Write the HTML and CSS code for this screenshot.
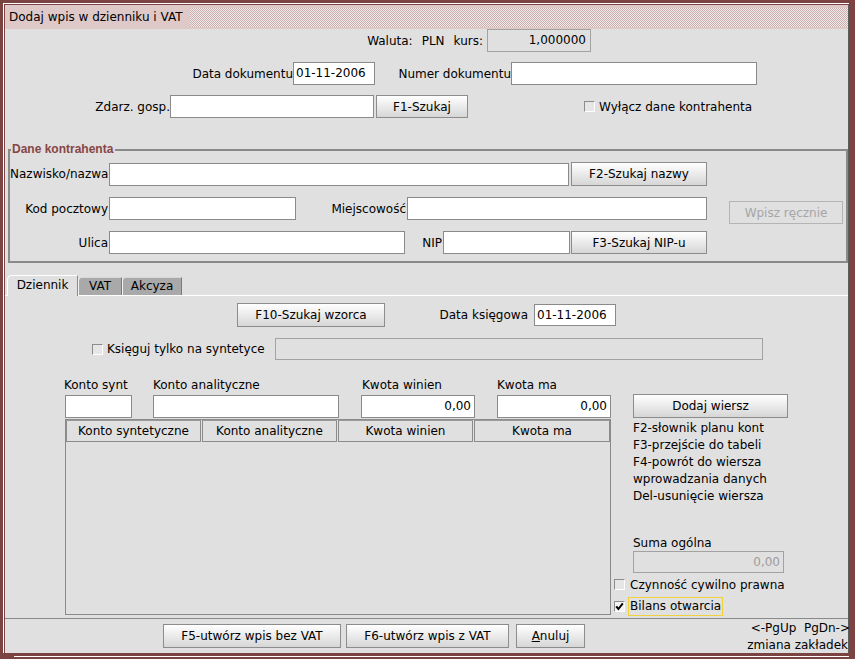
FILE: index.html
```html
<!DOCTYPE html>
<html lang="pl">
<head>
<meta charset="utf-8">
<title>Dodaj wpis w dzienniku i VAT</title>
<link rel="stylesheet" href="styles.css">
</head>
<body>
<div class="window">
  <div class="bevel">
    <div class="inner">
      <div class="titlebar">
        <span class="title">Dodaj wpis w dzienniku i VAT</span>
        <span class="grip"></span>
      </div>

      <div class="row row-a">
        <div class="currency"><span>Waluta:</span><span class="cur-pln">PLN</span><span class="cur-kurs">kurs:</span></div>
        <div class="field ro kurs">1,000000</div>
      </div>

      <div class="row row-b">
        <div class="lbl lbl-datadok">Data dokumentu</div>
        <div class="field w-datadok">01-11-2006</div>
        <div class="lbl lbl-numer">Numer dokumentu</div>
        <div class="field w-numer"></div>
      </div>

      <div class="row row-c">
        <div class="lbl lbl-zdarz">Zdarz. gosp.</div>
        <div class="field w-zdarz"></div>
        <div class="btn w-f1">F1-Szukaj</div>
        <span class="cb cb-wylacz"></span>
        <span class="cb-label">Wyłącz dane kontrahenta</span>
      </div>

      <fieldset class="group">
        <legend>Dane kontrahenta</legend>
        <div class="frow">
          <div class="lbl lbl-k">Nazwisko/nazwa</div>
          <div class="field w-nazwa"></div>
          <div class="btn w-f2">F2-Szukaj nazwy</div>
        </div>
        <div class="frow frow-2">
          <div class="lbl lbl-k">Kod pocztowy</div>
          <div class="field w-kod"></div>
          <div class="lbl lbl-miej">Miejscowość</div>
          <div class="field w-miej"></div>
          <div class="btn disabled w-wpisz">Wpisz ręcznie</div>
        </div>
        <div class="frow frow-3">
          <div class="lbl lbl-k">Ulica</div>
          <div class="field w-ulica"></div>
          <div class="lbl lbl-nip">NIP</div>
          <div class="field w-nip"></div>
          <div class="btn w-f3">F3-Szukaj NIP-u</div>
        </div>
      </fieldset>

      <div class="tabs">
        <div class="tab active">Dziennik</div>
        <div class="tab t-vat">VAT</div>
        <div class="tab t-akc">Akcyza</div>
      </div>

      <div class="panel">
        <div class="row prow-1">
          <div class="btn w-f10">F10-Szukaj wzorca</div>
          <div class="lbl lbl-dksieg">Data księgowa</div>
          <div class="field w-dksieg">01-11-2006</div>
        </div>
        <div class="row prow-2">
          <span class="cb cb-synt"></span>
          <span class="cb-label lbl-synt">Księguj tylko na syntetyce</span>
          <div class="field ro w-synt"></div>
        </div>

        <div class="lower">
          <div class="left">
            <div class="heads">
              <span class="h-synt">Konto synt</span>
              <span class="h-anal">Konto analityczne</span>
              <span class="h-win">Kwota winien</span>
              <span class="h-ma">Kwota ma</span>
            </div>
            <div class="inputs">
              <div class="field i-synt"></div>
              <div class="field i-anal"></div>
              <div class="field num i-win">0,00</div>
              <div class="field num i-ma">0,00</div>
            </div>
            <div class="table">
              <div class="thead">
                <div class="th">Konto syntetyczne</div>
                <div class="th">Konto analityczne</div>
                <div class="th">Kwota winien</div>
                <div class="th">Kwota ma</div>
              </div>
            </div>
          </div>

          <div class="right">
            <div class="btn w-dodaj">Dodaj wiersz</div>
            <div class="help">
              <div>F2-słownik planu kont</div>
              <div>F3-przejście do tabeli</div>
              <div>F4-powrót do wiersza</div>
              <div>wprowadzania danych</div>
              <div>Del-usunięcie wiersza</div>
            </div>
            <div class="suma-lbl">Suma ogólna</div>
            <div class="field ro num w-suma">0,00</div>
            <div class="check-row cr-1">
              <span class="cb"></span>
              <span class="cb-label">Czynność cywilno prawna</span>
            </div>
            <div class="check-row cr-2">
              <span class="cb checked"><svg width="9" height="9" viewBox="0 0 9 9"><polyline points="1.2,4.3 3.4,7 7.8,1.4" fill="none" stroke="#000" stroke-width="2"/></svg></span>
              <span class="cb-label focus">Bilans otwarcia</span>
            </div>
          </div>
        </div>
      </div>

      <div class="bottombar">
        <div class="btn w-f5">F5-utwórz wpis bez VAT</div>
        <div class="btn w-f6">F6-utwórz wpis z VAT</div>
        <div class="btn w-anuluj"><span class="u">A</span>nuluj</div>
        <div class="pg">
          <div class="pg-1">&lt;-PgUp&nbsp; PgDn-&gt;</div>
          <div>zmiana zakładek</div>
        </div>
      </div>
    </div>
  </div>
  <div class="frame-line"></div>
</div>
</body>
</html>
```

FILE: styles.css
```css
* { box-sizing: border-box; }
html, body { margin: 0; padding: 0; }
body {
  font-family: "DejaVu Sans", "Liberation Sans", sans-serif;
  font-size: 12px;
  color: #000;
  background: #7c4343;
}

.window {
  width: 855px;
  height: 659px;
  background: #7c4343;
  padding: 3px 6px 0 3px;
  overflow: hidden;
}
.bevel {
  border-top: 1px solid #fff;
  border-left: 1px solid #fff;
  padding: 1px 0 0 1px;
}
.inner {
  background: #e0e0e0;
  border-right: 1px solid #5e5e5e;
  height: 648px;
  display: flex;
  flex-direction: column;
}
.frame-line {
  height: 1px;
  background: #fff;
  margin: 3px 0 0 11px;
}

/* title */
.titlebar {
  height: 24px;
  flex: none;
  background: #dfc8c8;
  display: flex;
  align-items: center;
}
.title {
  width: 185px;
  padding-left: 4px;
  white-space: nowrap;
}
.grip {
  flex: 1;
  height: 19px;
  background: repeating-conic-gradient(#f3e9e9 0% 25%, #c8afaf 0% 50%) 0 0 / 2px 2px;
}

/* generic */
.row { display: flex; align-items: center; flex: none; }
.lbl { white-space: nowrap; text-align: right; flex: none; }
.field {
  flex: none;
  height: 23px;
  background: #fff;
  border: 1px solid #8a8a8a;
  padding: 0 2px;
  line-height: 21px;
  white-space: nowrap;
  overflow: hidden;
}
.field.ro {
  background: #e0e0e0;
  border-color: #a2a2a2;
}
.field.num { text-align: right; padding-right: 3px; }
.btn {
  flex: none;
  height: 24px;
  border: 1px solid #8c8c8c;
  background: linear-gradient(#ffffff, #d6d6d6);
  text-align: center;
  line-height: 22px;
  white-space: nowrap;
}
.btn.disabled {
  background: #e0e0e0;
  border-color: #b4b4b4;
  color: #a6a6a6;
}
.cb {
  flex: none;
  width: 11px;
  height: 11px;
  border: 1px solid;
  border-color: #8c8c8c #ffffff #ffffff #8c8c8c;
  background: #e6e6e6;
  display: inline-flex;
  align-items: center;
  justify-content: center;
}
.cb.checked { background: #f4f4f4; }
.cb-label { white-space: nowrap; }

/* row A */
.row-a { height: 23px; }
.currency {
  width: 140px;
  margin-left: 338px;
  display: flex;
  justify-content: flex-end;
  white-space: nowrap;
}
.cur-pln { margin-left: 9px; }
.cur-kurs { margin-left: 9px; }
.kurs { margin-left: 4px; width: 104px; text-align: right; padding-right: 4px; }

/* row B */
.row-b { height: 23px; margin-top: 10px; }
.lbl-datadok { width: 150px; margin-left: 138px; }
.w-datadok { width: 82px; }
.lbl-numer { width: 136px; }
.w-numer { width: 246px; }

/* row C */
.row-c { height: 23px; margin-top: 10px; }
.lbl-zdarz { width: 100px; margin-left: 65px; }
.w-zdarz { width: 204px; }
.w-f1 { width: 92px; height: 23px; margin-left: 2px; }
.cb-wylacz { margin-left: 116px; }
.row-c .cb-label { margin-left: 4px; }

/* fieldset */
.group {
  flex: none;
  margin: 24px 0 0 3px;
  border: 2px solid #8a8a8a;
  padding: 5px 0 7px 0;
  min-width: 0;
}
.group legend {
  font-family: "Liberation Sans", Arial, sans-serif;
  font-size: 12px;
  font-weight: bold;
  color: #874545;
  line-height: 15px;
  padding: 0 2px 0 1px;
  margin-left: 1px;
}
.frow { display: flex; align-items: center; height: 24px; }
.frow-2, .frow-3 { height: 23px; margin-top: 11px; }
.lbl-k { width: 98px; }
.w-nazwa { width: 460px; margin-left: 1px; }
.w-f2 { width: 136px; margin-left: 2px; }
.w-kod { width: 187px; margin-left: 1px; }
.lbl-miej { width: 110px; }
.w-miej { width: 300px; margin-left: 1px; }
.w-wpisz { width: 114px; height: 23px; margin-left: 22px; align-self: flex-start; margin-top: 4px; }
.w-ulica { width: 296px; margin-left: 1px; }
.lbl-nip { width: 37px; }
.w-nip { width: 127px; margin-left: 1px; }
.w-f3 { width: 136px; height: 23px; margin-left: 1px; }

/* tabs */
.tabs {
  flex: none;
  height: 20px;
  margin-top: 12px;
  padding-left: 2px;
  display: flex;
  align-items: flex-end;
  position: relative;
  z-index: 1;
}
.tab {
  height: 18px;
  line-height: 17px;
  text-align: center;
  background: #a9a9a9;
  border-top: 1px solid #d8d8d8;
  border-left: 1px solid #f4f4f4;
  border-right: 1px solid #7a7a7a;
  border-top-left-radius: 4px;
  white-space: nowrap;
}
.tab.active {
  width: 71px;
  height: 21px;
  line-height: 19px;
  margin-bottom: -1px;
  background: #e0e0e0;
  border-top-color: #fff;
  border-left-color: #fff;
  border-right-color: #8a8a8a;
  border-top-left-radius: 5px;
}
.t-vat { width: 44px; }
.t-akc { width: 60px; }

/* panel */
.panel {
  flex: none;
  height: 324px;
  border-top: 1px solid #fff;
  border-bottom: 1px solid #8a8a8a;
  display: flex;
  flex-direction: column;
}
.prow-1 { height: 24px; margin-top: 7px; }
.w-f10 { width: 148px; margin-left: 232px; }
.lbl-dksieg { width: 143px; }
.w-dksieg { width: 82px; height: 22px; line-height: 20px; margin-left: 6px; }
.prow-2 { height: 22px; margin-top: 11px; }
.cb-synt { margin-left: 87px; }
.lbl-synt { width: 164px; margin-left: 4px; }
.w-synt { width: 488px; height: 22px; margin-left: 4px; }

.lower { display: flex; margin-top: 17px; flex: none; }
.left { width: 546px; margin-left: 60px; flex: none; }
.heads { display: flex; height: 18px; line-height: 16px; white-space: nowrap; }
.heads span { display: block; flex: none; }
.h-synt { width: 88px; margin-left: -1px; }
.h-anal { width: 209px; margin-left: 1px; }
.h-win { width: 135px; }
.h-ma { margin-left: 0; }
.inputs { display: flex; height: 23px; }
.i-synt { width: 67px; }
.i-anal { width: 186px; margin-left: 21px; }
.i-win { width: 114px; margin-left: 22px; }
.i-ma { width: 114px; margin-left: 22px; }
.table {
  margin-top: 1px;
  height: 196px;
  border: 1px solid #8a8a8a;
}
.thead { display: flex; }
.th {
  flex: none;
  width: 135px;
  margin-right: 1px;
  height: 22px;
  line-height: 20px;
  border: 1px solid #8c8c8c;
  border-top-color: #9a9a9a;
  background: #e0e0e0;
  text-align: center;
  white-space: nowrap;
}
.th:last-child { margin-right: 0; width: 136px; }

.right { margin-left: 3px; width: 234px; flex: none; }
.w-dodaj { width: 155px; margin: 17px 0 0 19px; }
.help { margin: 2px 0 0 19px; line-height: 17px; white-space: nowrap; }
.suma-lbl { margin: 30px 0 0 19px; line-height: 16px; }
.w-suma { width: 151px; height: 22px; line-height: 20px; margin-left: 19px; color: #9c9c9c; }
.check-row { display: flex; align-items: center; }
.cr-1 { height: 17px; margin-top: 3px; }
.cr-1 .cb-label { margin-left: 5px; }
.cr-2 { height: 20px; margin-top: 3px; }
.cr-2 .cb-label { margin-left: 3px; }
.focus {
  border: 1px solid #f2d23c;
  padding: 0 1px;
  line-height: 17px;
}

/* bottom bar */
.bottombar {
  flex: none;
  height: 34px;
  display: flex;
  align-items: flex-start;
}
.bottombar .btn { margin-top: 5px; }
.w-f5 { width: 178px; margin-left: 158px; }
.w-f6 { width: 163px; margin-left: 5px; }
.w-anuluj { width: 69px; margin-left: 7px; }
.u { text-decoration: underline; }
.pg {
  margin-left: auto;
  margin-right: 0;
  text-align: right;
  line-height: 17px;
  padding-top: 1px;
  white-space: nowrap;
}
.pg-1 { margin-right: -2px; }
```
